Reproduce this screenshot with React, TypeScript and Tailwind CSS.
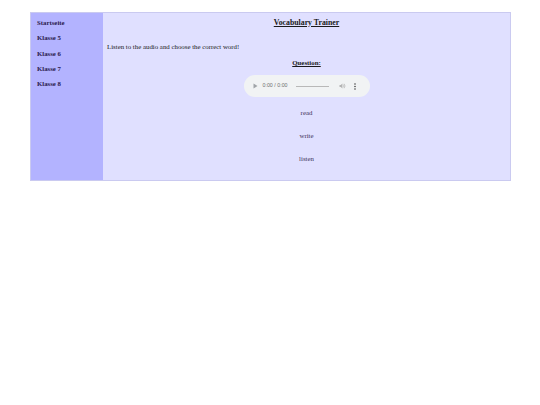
import React from "react";

const serif = { fontFamily: '"Liberation Serif", "Times New Roman", serif' };

function AudioPlayer() {
  return (
    <div
      className="w-[126px] h-[22px] rounded-full bg-[#f1f3f4] flex items-center pl-[9px] pr-[8px] text-[#5f6368]"
      style={{ fontFamily: '"Liberation Sans", Arial, sans-serif' }}
    >
      <svg width="5" height="6" viewBox="0 0 5 6" className="shrink-0">
        <path d="M0.5 0.5 L4.5 3 L0.5 5.5 Z" fill="#a0a4a8" />
      </svg>
      <span className="ml-[5px] text-[5.3px] leading-none text-[#707070]">0:00 / 0:00</span>
      <div className="ml-[8px] w-[33px] h-[1px] bg-[#b8b8b8]" />
      <svg width="7" height="6" viewBox="0 0 7 6" className="ml-[10px] shrink-0">
        <path d="M0.5 2 H1.8 L3.4 0.6 V5.4 L1.8 4 H0.5 Z" fill="#b4b4b4" />
        <path d="M4.4 1.6 Q5.5 3 4.4 4.4" stroke="#b4b4b4" strokeWidth="0.7" fill="none" />
        <path d="M5.2 0.8 Q6.8 3 5.2 5.2" stroke="#b4b4b4" strokeWidth="0.7" fill="none" />
      </svg>
      <svg width="2" height="7" viewBox="0 0 2 7" className="ml-[8px] shrink-0">
        <circle cx="1" cy="1" r="0.8" fill="#444" />
        <circle cx="1" cy="3.5" r="0.8" fill="#444" />
        <circle cx="1" cy="6" r="0.8" fill="#444" />
      </svg>
    </div>
  );
}

export default function App() {
  const nav = ["Startseite", "Klasse 5", "Klasse 6", "Klasse 7", "Klasse 8"];
  return (
    <div className="w-[540px] h-[405px] bg-white pt-[12px] pl-[30px] antialiased" style={serif}>
      <div className="w-[481px] flex border border-[#cacaf0] bg-[#e0e0ff]">
        <div className="w-[72px] bg-[#b3b3ff] pt-[2px] pl-[6px] shrink-0">
          {nav.map((n) => (
            <div key={n} className="text-[6.8px] leading-[15.3px] font-bold text-[#2b1a4e]">
              {n}
            </div>
          ))}
        </div>
        <div className="flex-1 flex flex-col items-center pt-[5px] pb-[16px]">
          <div className="text-[7.8px] leading-[10px] font-bold underline text-[#1a1a1a]">
            Vocabulary Trainer
          </div>
          <div className="self-start pl-[4px] mt-[14px] text-[6.85px] leading-[10px] text-[#1a1a1a]">
            Listen to the audio and choose the correct word!
          </div>
          <div className="mt-[6px] text-[6.85px] leading-[10px] font-bold underline text-[#1a1a1a]">
            Question:
          </div>
          <div className="mt-[7px]">
            <AudioPlayer />
          </div>
          <div className="mt-[11px] text-[6.85px] leading-[10px] text-[#3e3058]">read</div>
          <div className="mt-[13px] text-[6.85px] leading-[10px] text-[#3e3058]">write</div>
          <div className="mt-[13px] text-[6.85px] leading-[10px] text-[#3e3058]">listen</div>
        </div>
      </div>
    </div>
  );
}
